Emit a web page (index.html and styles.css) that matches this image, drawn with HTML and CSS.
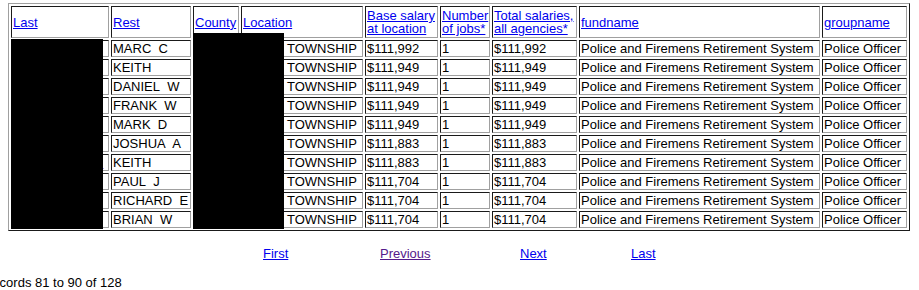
FILE: index.html
```html
<!DOCTYPE html>
<html>
<head>
<meta charset="utf-8">
<link rel="stylesheet" href="styles.css">
</head>
<body>
<div class="wrap">
  <table class="grid">
    <thead>
      <tr>
        <th class="c-last"><a href="#">Last</a></th>
        <th class="c-rest"><a href="#">Rest</a></th>
        <th class="c-county"><a href="#">County</a></th>
        <th class="c-loc"><a href="#">Location</a></th>
        <th class="c-base"><a href="#">Base salary at location</a></th>
        <th class="c-num"><a href="#">Number of jobs*</a></th>
        <th class="c-total"><a href="#">Total salaries, all agencies*</a></th>
        <th class="c-fund"><a href="#">fundname</a></th>
        <th class="c-group"><a href="#">groupname</a></th>
      </tr>
    </thead>
    <tbody>
      <tr><td>XXXXXX</td><td>MARC&nbsp; C</td><td>XXXXX</td><td><span class="hid"></span>TOWNSHIP</td><td>$111,992</td><td>1</td><td>$111,992</td><td>Police and Firemens Retirement System</td><td>Police Officer</td></tr>
      <tr><td>XXXXXX</td><td>KEITH</td><td>XXXXX</td><td><span class="hid"></span>TOWNSHIP</td><td>$111,949</td><td>1</td><td>$111,949</td><td>Police and Firemens Retirement System</td><td>Police Officer</td></tr>
      <tr><td>XXXXXX</td><td>DANIEL&nbsp; W</td><td>XXXXX</td><td><span class="hid"></span>TOWNSHIP</td><td>$111,949</td><td>1</td><td>$111,949</td><td>Police and Firemens Retirement System</td><td>Police Officer</td></tr>
      <tr><td>XXXXXX</td><td>FRANK&nbsp; W</td><td>XXXXX</td><td><span class="hid"></span>TOWNSHIP</td><td>$111,949</td><td>1</td><td>$111,949</td><td>Police and Firemens Retirement System</td><td>Police Officer</td></tr>
      <tr><td>XXXXXX</td><td>MARK&nbsp; D</td><td>XXXXX</td><td><span class="hid"></span>TOWNSHIP</td><td>$111,949</td><td>1</td><td>$111,949</td><td>Police and Firemens Retirement System</td><td>Police Officer</td></tr>
      <tr><td>XXXXXX</td><td>JOSHUA&nbsp; A</td><td>XXXXX</td><td><span class="hid"></span>TOWNSHIP</td><td>$111,883</td><td>1</td><td>$111,883</td><td>Police and Firemens Retirement System</td><td>Police Officer</td></tr>
      <tr><td><a href="#">XXXXXXXXXX&nbsp;</a></td><td>KEITH</td><td>XXXXX</td><td><span class="hid"></span>TOWNSHIP</td><td>$111,883</td><td>1</td><td>$111,883</td><td>Police and Firemens Retirement System</td><td>Police Officer</td></tr>
      <tr><td>XXXXXX</td><td>PAUL&nbsp; J</td><td>XXXXX</td><td><span class="hid"></span>TOWNSHIP</td><td>$111,704</td><td>1</td><td>$111,704</td><td>Police and Firemens Retirement System</td><td>Police Officer</td></tr>
      <tr><td>XXXXXX</td><td>RICHARD&nbsp; E</td><td>XXXXX</td><td><span class="hid"></span>TOWNSHIP</td><td>$111,704</td><td>1</td><td>$111,704</td><td>Police and Firemens Retirement System</td><td>Police Officer</td></tr>
      <tr><td>XXXXXX</td><td>BRIAN&nbsp; W</td><td>XXXXX</td><td><span class="hid"></span>TOWNSHIP</td><td>$111,704</td><td>1</td><td>$111,704</td><td>Police and Firemens Retirement System</td><td>Police Officer</td></tr>
    </tbody>
  </table>
  <div class="redact redact-last"></div>
  <div class="redact redact-county"></div>
</div>
<nav class="pager">
  <a href="#">First</a>
  <a href="#" class="visited">Previous</a>
  <a href="#">Next</a>
  <a href="#">Last</a>
</nav>
<p class="records">Records 81 to 90 of 128</p>
</body>
</html>
```

FILE: styles.css
```css
html, body {
  margin: 0;
  padding: 0;
  background: #ffffff;
}
body {
  font-family: "Liberation Sans", Arial, sans-serif;
  font-size: 13px;
  color: #000000;
  padding: 3px 8px 0 8px;
}
a {
  color: #0000ee;
  text-decoration: underline;
}
a.visited {
  color: #551a8b;
}
.wrap {
  position: relative;
  width: 902px;
}
.grid {
  table-layout: fixed;
  width: 902px;
  border-collapse: separate;
  border-spacing: 2px;
  border: 1px solid;
  border-color: #a0a0a0 #1a1a1a #1a1a1a #a0a0a0;
}
.grid th,
.grid td {
  box-sizing: border-box;
  border: 1px solid;
  border-color: #1a1a1a #a0a0a0 #a0a0a0 #1a1a1a;
  padding: 0 1px;
  line-height: 15px;
  text-align: left;
  vertical-align: middle;
  white-space: nowrap;
  overflow: hidden;
  font-weight: normal;
}
.grid th {
  height: 32px;
  white-space: normal;
  line-height: 13px;
}
.grid td {
  height: 17px;
}
.c-last { width: 98px; }
.c-rest { width: 80px; }
.c-county { width: 46px; }
.c-loc { width: 122px; }
.c-base { width: 73px; }
.c-num { width: 50px; }
.c-total { width: 85px; }
.c-fund { width: 241px; }
.c-group { width: 85px; }
.hid {
  display: inline-block;
  width: 44px;
  height: 0;
}
.redact {
  position: absolute;
  background: #000000;
}
.redact-last {
  left: 3px;
  top: 36px;
  width: 92px;
  height: 190px;
}
.redact-county {
  left: 185px;
  top: 30px;
  width: 91px;
  height: 196px;
}
.pager {
  display: grid;
  grid-template-columns: 117px 140px 111px auto;
  margin: 15px 0 0 255px;
  line-height: 15px;
}
.records {
  margin: 14px 0 0 -25px;
  line-height: 15px;
}
```
